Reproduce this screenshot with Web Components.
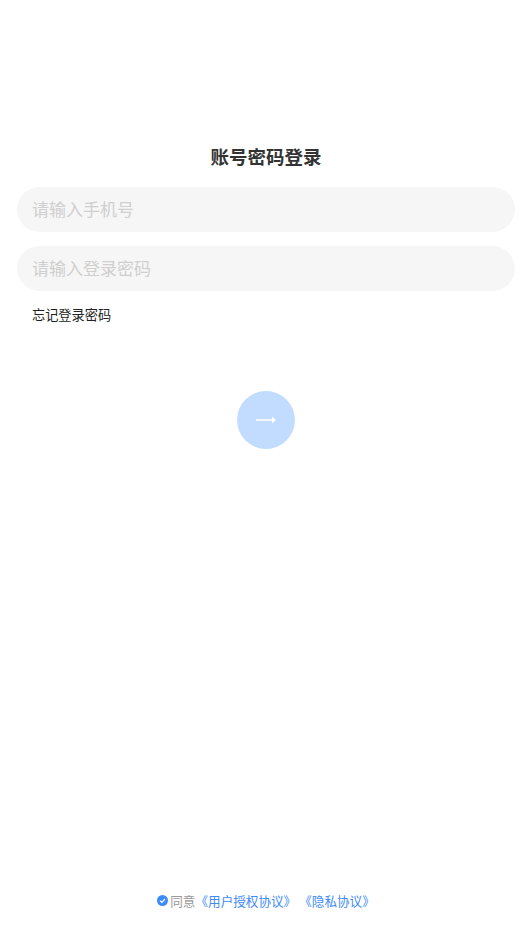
<!DOCTYPE html>
<html lang="zh">
<head>
<meta charset="utf-8">
<title>账号密码登录</title>
<style>
  html, body { margin: 0; padding: 0; height: 100%; background: #fff; }
  body { font-family: "Noto Sans CJK SC", "Liberation Sans", sans-serif; }
</style>
</head>
<body>
<login-page>
  <span slot="title">账号密码登录</span>
  <login-field>请输入手机号</login-field>
  <login-field>请输入登录密码</login-field>
  <span slot="forgot">忘记登录密码</span>
  <agree-line slot="footer"></agree-line>
</login-page>

<script>
class LoginPage extends HTMLElement {
    constructor() {
        super();
        this.attachShadow({ mode: "open" });
    }

    connectedCallback() {
        this.shadowRoot.innerHTML = `
      <style>
        :host { display:flex; flex-direction:column; height:946px; box-sizing:border-box; padding:143px 17px 0; color:#333; }
        .title { font-size:18.5px; line-height:26px; font-weight:700; text-align:center; color:#333; }
        .fields { display:flex; flex-direction:column; gap:14px; margin-top:18px; }
        .forgot { font-size:13.2px; line-height:18px; color:#222; margin:15px 0 0 15px; }
        .next { align-self:center; margin-top:67px; width:58px; height:58px; border:none; padding:0; border-radius:50%; background:#c2dcff; display:flex; align-items:center; justify-content:center; }
        .footer { margin-top:auto; padding-bottom:36px; display:flex; justify-content:center; }
      </style>
      <div class="title"><slot name="title"></slot></div>
      <div class="fields"><slot></slot></div>
      <div class="forgot"><slot name="forgot"></slot></div>
      <button class="next" aria-label="下一步">
        <svg width="20" height="10" viewBox="0 0 20 10"><path d="M0 5H17" stroke="#fff" stroke-width="1.6" fill="none"/><path d="M16 1.5L20 5L16 8.5Z" fill="#fff"/></svg>
      </button>
      <div class="footer"><slot name="footer"></slot></div>
    `;
    }
}

class LoginField extends HTMLElement {
    constructor() {
        super();
        this.attachShadow({ mode: "open" });
    }

    connectedCallback() {
        this.shadowRoot.innerHTML = `
      <style>
        :host { display:flex; align-items:center; height:45px; box-sizing:border-box; padding:0 15px 2px; border-radius:22.5px; background:#f6f6f6; color:#cfcfcf; font-size:17px; }
      </style>
      <slot></slot>
    `;
    }
}

class AgreeLine extends HTMLElement {
    constructor() {
        super();
        this.attachShadow({ mode: "open" });
    }

    connectedCallback() {
        this.shadowRoot.innerHTML = `
      <style>
        :host { display:flex; align-items:center; font-size:12.6px; line-height:18px; color:#999; }
        svg { margin-right:2px; position:relative; top:-1px; }
        a { color:#3d8bf8; text-decoration:none; }
        a + a { margin-left:3px; }
      </style>
      <svg width="11" height="11" viewBox="0 0 11 11"><circle cx="5.5" cy="5.5" r="5.5" fill="#3d8bf8"/><path d="M3 5.6L4.9 7.3L8 4" stroke="#fff" stroke-width="1.2" fill="none"/></svg>
      <span>同意</span><a href="#">《用户授权协议》</a><a href="#">《隐私协议》</a>
    `;
    }
}

customElements.define('login-page', LoginPage);
customElements.define('login-field', LoginField);
customElements.define('agree-line', AgreeLine);
</script>
</body>
</html>
